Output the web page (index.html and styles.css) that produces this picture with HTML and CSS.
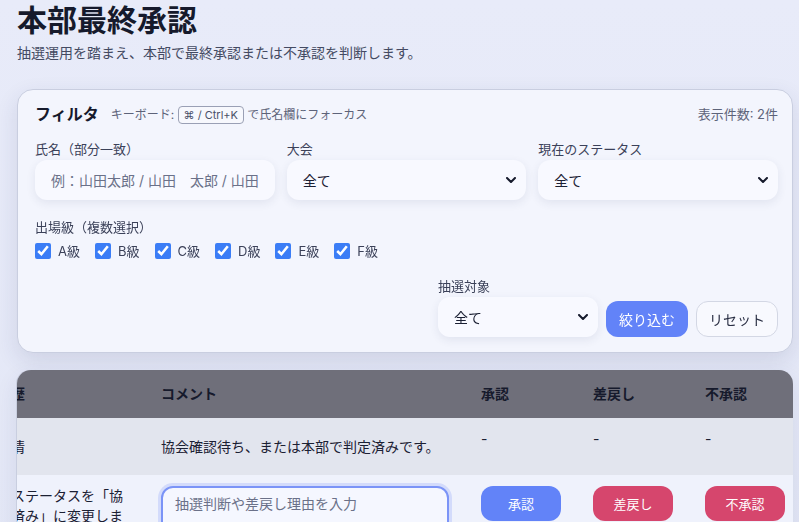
FILE: index.html
```html
<!DOCTYPE html>
<html lang="ja">
<head>
  <meta charset="UTF-8">
  <meta name="viewport" content="width=device-width, initial-scale=1.0">
  <title>本部最終承認</title>
  <link rel="stylesheet" href="styles.css">
</head>
<body>
  <div class="page">
    <h1 class="page-title">本部最終承認</h1>
    <p class="page-lead">抽選運用を踏まえ、本部で最終承認または不承認を判断します。</p>

    <section class="filter-card">
      <div class="filter-head">
        <div class="filter-title">
          <h2>フィルタ</h2>
          <span class="hint">キーボード: <kbd>⌘ / Ctrl+K</kbd> で氏名欄にフォーカス</span>
        </div>
        <span class="count">表示件数: 2件</span>
      </div>

      <div class="filter-grid">
        <label class="field">
          <span class="field-label">氏名（部分一致）</span>
          <input class="control" type="text" placeholder="例：山田太郎 / 山田　太郎 / 山田太郎">
        </label>
        <label class="field">
          <span class="field-label">大会</span>
          <select class="control">
            <option>全て</option>
          </select>
        </label>
        <label class="field">
          <span class="field-label">現在のステータス</span>
          <select class="control">
            <option>全て</option>
          </select>
        </label>
      </div>

      <div class="grades">
        <span class="field-label">出場級（複数選択）</span>
        <div class="grade-list">
          <label class="grade"><input type="checkbox" checked> A級</label>
          <label class="grade"><input type="checkbox" checked> B級</label>
          <label class="grade"><input type="checkbox" checked> C級</label>
          <label class="grade"><input type="checkbox" checked> D級</label>
          <label class="grade"><input type="checkbox" checked> E級</label>
          <label class="grade"><input type="checkbox" checked> F級</label>
        </div>
      </div>

      <div class="filter-actions">
        <label class="field field-narrow">
          <span class="field-label">抽選対象</span>
          <select class="control">
            <option>全て</option>
          </select>
        </label>
        <button class="btn btn-primary">絞り込む</button>
        <button class="btn btn-ghost">リセット</button>
      </div>
    </section>

    <div class="table-wrap" id="table-wrap">
      <table class="table">
        <colgroup>
          <col class="col-name">
          <col class="col-event">
          <col class="col-status">
          <col class="col-history">
          <col class="col-comment">
          <col class="col-action">
          <col class="col-action">
          <col class="col-last">
        </colgroup>
        <thead>
          <tr>
            <th>氏名</th>
            <th>大会</th>
            <th>ステータス</th>
            <th>操作履歴</th>
            <th>コメント</th>
            <th>承認</th>
            <th>差戻し</th>
            <th>不承認</th>
          </tr>
        </thead>
        <tbody>
          <tr class="row-done">
            <td>山田 太郎</td>
            <td>春季大会</td>
            <td><span class="pill">本部判定済</span></td>
            <td>特記事情</td>
            <td>協会確認待ち、または本部で判定済みです。</td>
            <td class="dash">-</td>
            <td class="dash">-</td>
            <td class="dash">-</td>
          </tr>
          <tr>
            <td>佐藤 花子</td>
            <td>春季大会</td>
            <td><span class="pill">協会確認済</span></td>
            <td>本部でステータスを「協会確認済み」に変更しました。</td>
            <td><textarea class="comment-box" rows="3" placeholder="抽選判断や差戻し理由を入力" autofocus></textarea></td>
            <td><button class="btn-sm btn-approve">承認</button></td>
            <td><button class="btn-sm btn-danger">差戻し</button></td>
            <td><button class="btn-sm btn-danger">不承認</button></td>
          </tr>
        </tbody>
      </table>
    </div>
  </div>

  <script>
    // 右端の操作列が見える位置までスクロールしておく
    const wrap = document.getElementById("table-wrap");
    wrap.scrollLeft = wrap.scrollWidth - wrap.clientWidth;
  </script>
</body>
</html>
```

FILE: styles.css
```css
* {
  box-sizing: border-box;
}

body {
  margin: 0;
  font-family: Inter, "Noto Sans CJK JP", sans-serif;
  color: #1b2033;
  background: linear-gradient(180deg, #e8ebf9 0%, #e3e7f6 100%);
  min-height: 100vh;
}

.page {
  padding: 0 6px 24px 17px;
}

.page-title {
  margin: 0;
  font-size: 30px;
  line-height: 40px;
  font-weight: 700;
  color: #161a2c;
}

.page-lead {
  margin: 4px 0 0;
  font-size: 14px;
  line-height: 18px;
  color: #444a62;
}

/* フィルタ */
.filter-card {
  margin-top: 27px;
  background: #f3f5fd;
  border: 1px solid #c9cee0;
  border-radius: 16px;
  padding: 12px 14px 15px 17px;
  box-shadow: 0 8px 22px rgba(40, 50, 100, 0.12);
}

.filter-head {
  display: flex;
  justify-content: space-between;
  align-items: center;
  height: 22px;
}

.filter-title {
  display: flex;
  align-items: center;
  gap: 12px;
}

.filter-title h2 {
  margin: 0;
  font-size: 16px;
  font-weight: 700;
  color: #161a2c;
}

.hint {
  font-size: 12px;
  color: #5d6379;
}

.hint kbd {
  font-family: inherit;
  font-size: 11px;
  border: 1px solid #9aa0b5;
  border-radius: 4px;
  padding: 1px 5px;
  color: #4a5068;
  background: #f7f8fd;
}

.count {
  font-size: 13px;
  color: #5d6379;
}

.filter-grid {
  display: grid;
  grid-template-columns: repeat(3, 1fr);
  gap: 12px;
  margin-top: 16px;
}

.field {
  display: flex;
  flex-direction: column;
  gap: 2px;
}

.field-label {
  font-size: 13px;
  line-height: 18px;
  color: #3b4159;
}

.control {
  height: 40px;
  width: 100%;
  border: none;
  border-radius: 12px;
  background-color: #f8f9ff;
  padding: 0 16px;
  font-family: inherit;
  font-size: 14px;
  color: #1b2033;
  box-shadow: 0 3px 10px rgba(40, 50, 100, 0.09);
  outline: none;
}

.control::placeholder {
  color: #6b7189;
}

select.control {
  appearance: none;
  background-image: url("data:image/svg+xml,%3Csvg xmlns='http://www.w3.org/2000/svg' width='10' height='6' viewBox='0 0 10 6'%3E%3Cpath d='M1 1l4 4 4-4' fill='none' stroke='%23161a2c' stroke-width='2' stroke-linecap='round' stroke-linejoin='round'/%3E%3C/svg%3E");
  background-repeat: no-repeat;
  background-position: right 10px center;
}

.grades {
  margin-top: 16px;
}

.grade-list {
  display: flex;
  gap: 15px;
  margin-top: 5px;
}

.grade {
  display: flex;
  align-items: center;
  gap: 7px;
  font-size: 13px;
  color: #3b4159;
}

.grade input {
  margin: 0;
  width: 16px;
  height: 16px;
  accent-color: #3b7df6;
}

.filter-actions {
  display: flex;
  justify-content: flex-end;
  align-items: flex-end;
  gap: 8px;
  margin-top: 17px;
}

.field-narrow {
  width: 160px;
}

.btn {
  height: 36px;
  width: 82px;
  border-radius: 12px;
  font-family: inherit;
  font-size: 14px;
  cursor: pointer;
}

.btn-primary {
  border: none;
  background: #6283f8;
  color: #fff;
}

.btn-ghost {
  border: 1px solid #d3d7e4;
  background: #f8f9fe;
  color: #2a2f44;
}

/* 一覧 */
.table-wrap {
  margin-top: 17px;
  border-radius: 14px;
  overflow-x: auto;
  box-shadow: -1px 0 0 #c9cee0, 0 8px 22px rgba(40, 50, 100, 0.1);
}

.table {
  width: 1280px;
  table-layout: fixed;
  border-collapse: collapse;
  font-size: 14px;
}

.col-name { width: 160px; }
.col-event { width: 140px; }
.col-status { width: 140px; }
.col-history { width: 192px; }
.col-comment { width: 320px; }
.col-action { width: 112px; }
.col-last { width: 104px; }

.table th,
.table td {
  text-align: left;
  vertical-align: top;
  padding: 11px 16px;
  line-height: 20px;
}

.table th {
  background: #6f6f7a;
  color: #161a2c;
  font-weight: 700;
  padding-top: 14px;
  padding-bottom: 14px;
}

.table th:last-child,
.table td:last-child {
  padding-right: 8px;
}

.table tbody tr {
  background: #eff2fc;
}

.table tbody tr.row-done {
  background: #e2e5ee;
}

.table tr.row-done td {
  vertical-align: middle;
}

.table tr.row-done td.dash {
  vertical-align: top;
}

.pill {
  display: inline-block;
  padding: 7px 12px;
  line-height: 21px;
  border-radius: 999px;
  background: #d5dbf3;
  font-size: 13px;
}

.comment-box {
  display: block;
  width: 100%;
  border: 2px solid #7b94f7;
  border-radius: 12px;
  background: #f5f7ff;
  padding: 6px 12px;
  font-family: inherit;
  font-size: 14px;
  line-height: 20px;
  color: #1b2033;
  resize: vertical;
  outline: none;
  box-shadow: 0 0 0 3px rgba(98, 131, 248, 0.2);
}

.comment-box::placeholder {
  color: #6b7189;
}

.btn-sm {
  width: 80px;
  height: 35px;
  border: none;
  border-radius: 12px;
  color: #fff;
  font-family: inherit;
  font-size: 13px;
  cursor: pointer;
}

.btn-approve {
  background: #6283f8;
}

.btn-danger {
  background: #d6466d;
}
```
